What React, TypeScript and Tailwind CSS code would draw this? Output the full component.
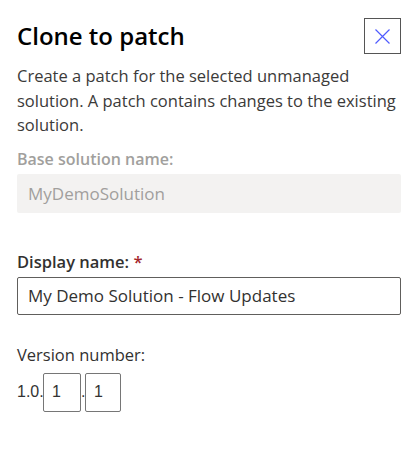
import React from 'react'

const font = { fontFamily: '"Segoe UI", "Open Sans", sans-serif' }

export default function App() {
  return (
    <div className="w-[419px] h-[466px] bg-white text-[#323130]" style={font}>
      <div className="flex flex-col pl-[17px] pr-[18px]">
        {/* Header */}
        <div className="flex items-start justify-between pt-[18px]">
          <h1 className="text-[24px] font-semibold leading-[36px] text-black">Clone to patch</h1>
          <button className="w-[37px] h-[36px] border border-[#555] flex items-center justify-center">
            <svg width="15" height="15" viewBox="0 0 15 15" fill="none" stroke="#4f5bff" strokeWidth="1.2">
              <path d="M0.5 0.5 L14.5 14.5 M14.5 0.5 L0.5 14.5" />
            </svg>
          </button>
        </div>

        <p className="mt-[10px] w-[392px] text-[16.5px] leading-[24.5px] text-[#3b3a39]">
          Create a patch for the selected unmanaged solution. A patch contains changes to the existing solution.
        </p>

        {/* Base solution name */}
        <label className="mt-[10px] text-[16px] font-semibold leading-[22px] text-[#a19f9d]">Base solution name:</label>
        <div className="mt-[4px] h-[39px] rounded-[2px] bg-[#f3f2f1] flex items-center pl-[11px] pt-[2px] text-[17px] text-[#a19f9d]">
          MyDemoSolution
        </div>

        {/* Display name */}
        <label className="mt-[38px] text-[16.5px] font-semibold leading-[22px] text-[#323130]">
          Display name: <span className="text-[#a4262c]">*</span>
        </label>
        <div className="mt-[4px] h-[38px] rounded-[2px] border border-[#605e5c] flex items-center pl-[10px] text-[17px] text-[#323130]">
          My Demo Solution - Flow Updates
        </div>

        {/* Version number */}
        <label className="mt-[29px] text-[16.5px] leading-[22px] text-[#323130]">Version number:</label>
        <div
          className="mt-[7px] flex items-center text-[16px] text-[#333]"
          style={{ fontFamily: '"Liberation Sans", Arial, sans-serif' }}
        >
          <span className="w-[26px]">1.0.</span>
          <div className="w-[38px] h-[39px] border border-[#767676] rounded-[2px] flex items-center pl-[8px]">1</div>
          <span className="w-[4px]">.</span>
          <div className="w-[36px] h-[39px] border border-[#767676] rounded-[2px] flex items-center pl-[8px]">1</div>
        </div>
      </div>
    </div>
  )
}
